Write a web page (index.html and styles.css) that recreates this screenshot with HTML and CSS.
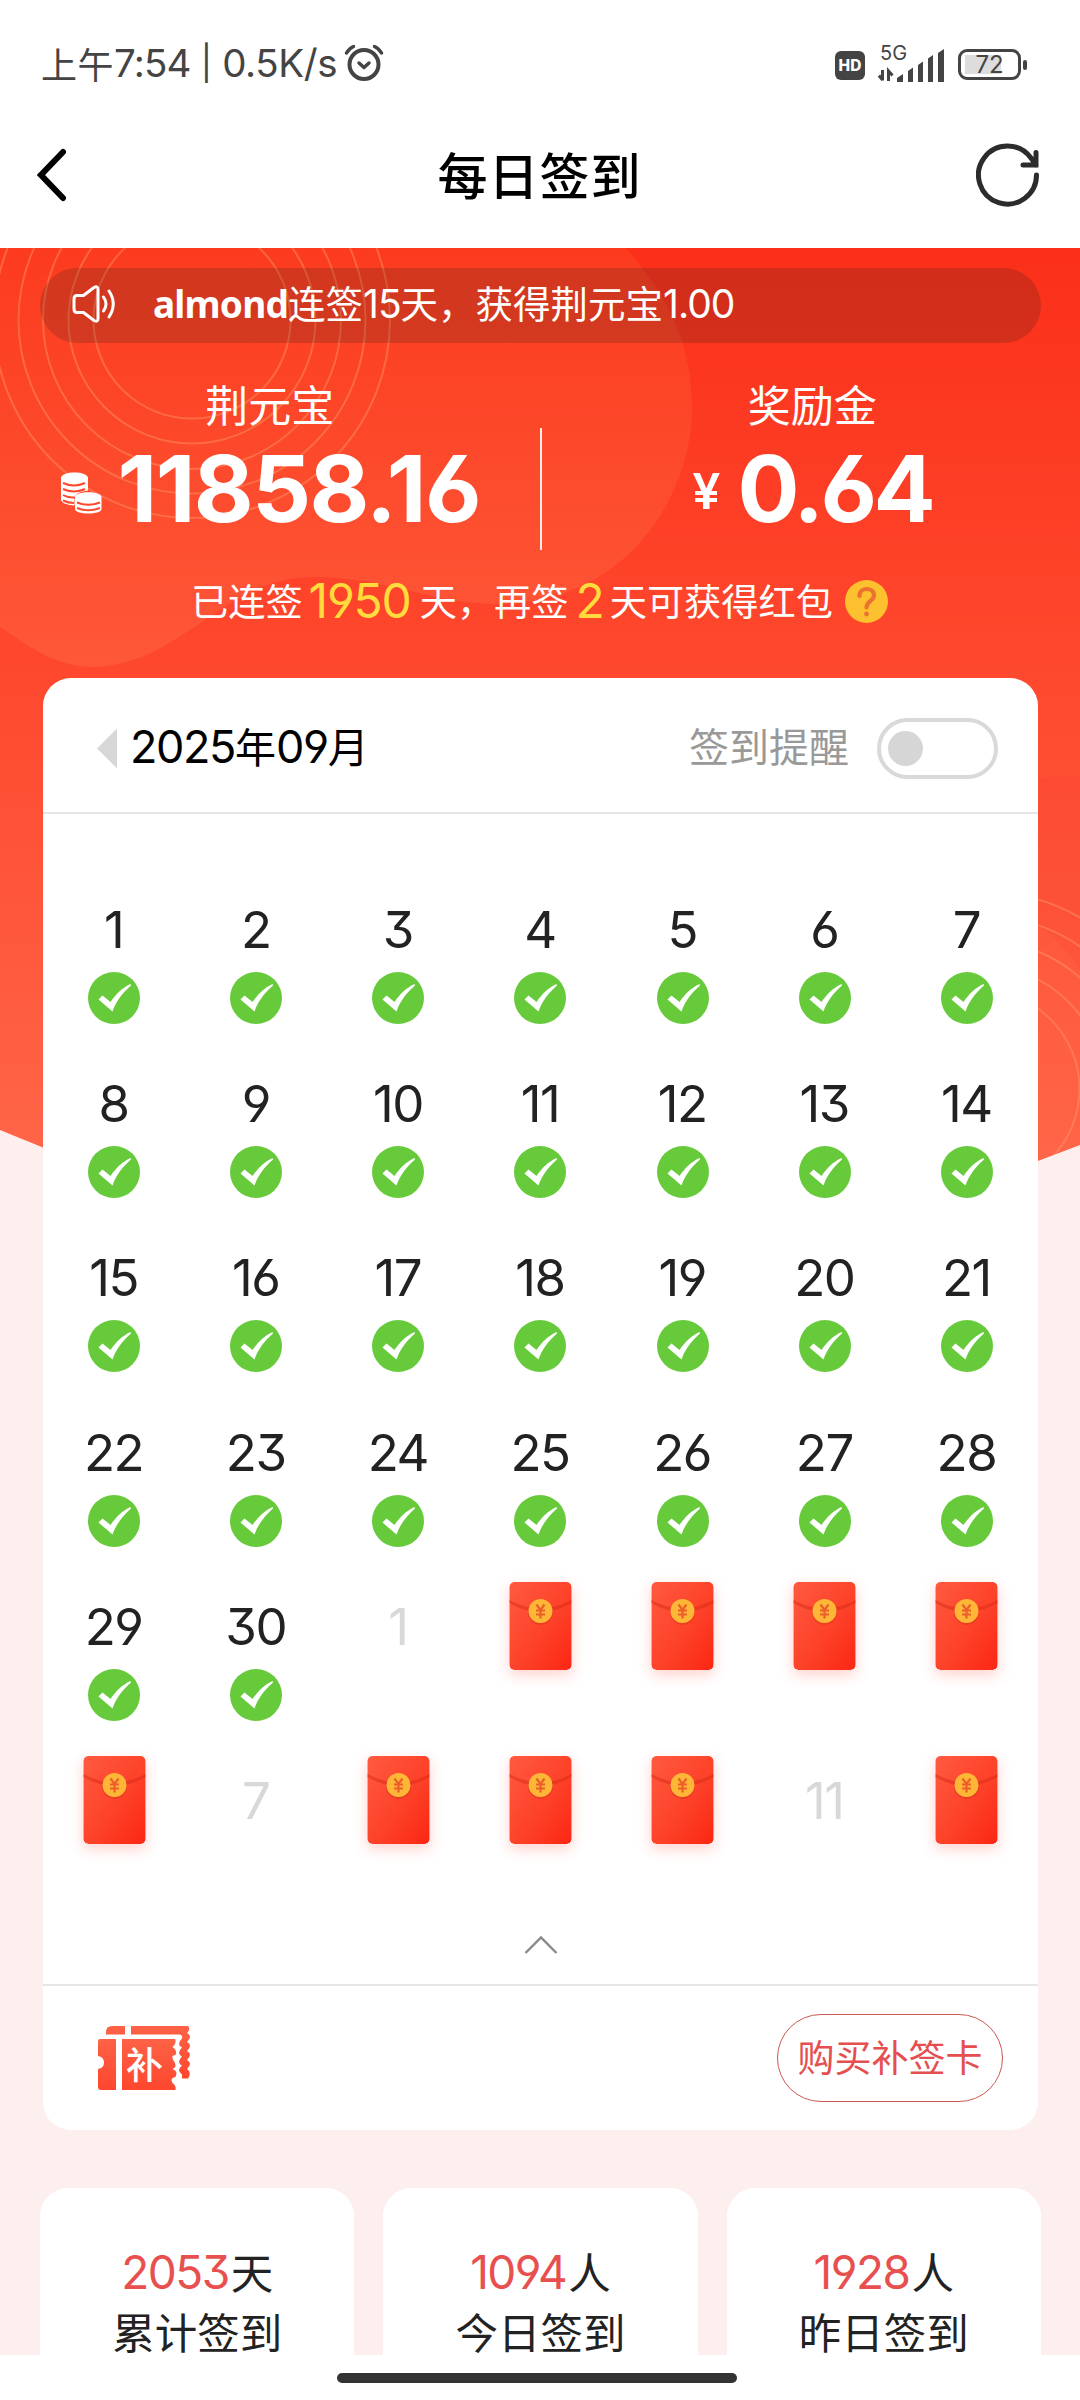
FILE: index.html
```html
<!DOCTYPE html>
<html lang="zh-CN">
<head>
<meta charset="utf-8">
<title>每日签到</title>
<link rel="stylesheet" href="styles.css">
</head>
<body>
<svg class="defs" width="0" height="0" aria-hidden="true">
  <defs>
    <linearGradient id="packetFill" x1="0" y1="0" x2="1" y2="1">
      <stop offset="0" stop-color="#ff5a40"/><stop offset=".55" stop-color="#fd4229"/><stop offset="1" stop-color="#fb2613"/>
    </linearGradient>
    <linearGradient id="ticketFill" x1="0" y1="0" x2="0" y2="1">
      <stop offset="0" stop-color="#fd6246"/><stop offset="1" stop-color="#fd472e"/>
    </linearGradient>
    <symbol id="check" viewBox="0 0 52 52">
      <circle cx="26" cy="26" r="26" fill="#67ca3b"/>
      <path d="M10.5 27.5l4-4 8 6.500C28 22 34 16 42.500 12l.5 1.500C34 21.500 28 29.500 24.500 39.500z" fill="#fff"/>
    </symbol>
    <symbol id="packet" viewBox="0 0 62 88">
      <rect width="62" height="88" rx="5" fill="url(#packetFill)"/>
      <path d="M0 18C20 29 42 29 62 18v3C42 33 20 33 0 21z" fill="#d92a18" opacity=".5"/>
      <circle cx="31" cy="30.500" r="12.500" fill="#c93114" opacity=".35"/>
      <circle cx="31" cy="29" r="12" fill="#fdb636"/>
      <path d="M27 22.500l4 5.500 4-5.500M26.500 28.500h9M26.500 32.500h9M31 28v8.500" fill="none" stroke="#ec5f2a" stroke-width="2.200"/>
    </symbol>
  </defs>
</svg>

<header class="status">
  <div class="status-left">
    <span class="cjk">上午</span><span class="num">7:54</span><span class="num bar">|</span><span class="num speed">0.5K/s</span>
    <svg width="40" height="38" viewBox="0 0 40 38" fill="none" stroke="#444" stroke-linecap="round">
      <circle cx="20" cy="20.500" r="14.500" stroke-width="4"/>
      <path d="M15 19l5 4.500 5-4.500" stroke-width="3.500" stroke-linejoin="round"/>
      <path d="M2.500 9Q5 4.500 9.500 2.500M37.500 9Q35 4.500 30.500 2.500" stroke-width="3.500"/>
    </svg>
  </div>
  <div class="status-right">
    <span class="hd">HD</span>
    <div class="signal">
      <span class="net">5G</span>
      <svg width="68" height="36" viewBox="0 0 68 36" fill="#444">
        <path d="M4.500 24v10.500M4.500 34L1 29.500M10.500 35V25l4 4.500" stroke="#444" stroke-width="3" fill="none"/>
        <path d="M19 36v-4l6-4v8zM30 36V25l5-3.500V36zM40 36V19l5-3.500V36zM50 36V12.500l5-3.500v27zM60 36V7l6-4v33z"/>
      </svg>
    </div>
    <div class="battery"><span>72</span></div><i class="battery-tip"></i>
  </div>
</header>

<nav class="nav">
  <svg width="30" height="54" viewBox="0 0 30 54" fill="none" stroke="#000" stroke-width="6" stroke-linecap="round"><path d="M26 4L4 27l22 23" stroke-linejoin="miter"/></svg>
  <h1>每日签到</h1>
  <svg width="64" height="64" viewBox="0 0 64 64" fill="none" stroke="#2c2c2c" stroke-width="5" stroke-linecap="round">
    <path d="M60.500 32A29 29 0 1 1 55 15l5 7M60 9.500V22H47"/>
  </svg>
</nav>

<main class="page">
  <svg class="backdrop" width="1080" height="920" viewBox="0 248 1080 920">
    <defs>
      <linearGradient id="sky" x1="0" y1="0" x2="0" y2="1">
        <stop offset="0" stop-color="#fb2f1a"/><stop offset=".45" stop-color="#fe482d"/><stop offset="1" stop-color="#ff6649"/>
      </linearGradient>
      <linearGradient id="cloud" x1="0" y1="0" x2="0" y2="1">
        <stop offset="0" stop-color="#ff6a30" stop-opacity=".2"/><stop offset="1" stop-color="#ff8058" stop-opacity=".28"/>
      </linearGradient>
      <clipPath id="slope"><path d="M0 248H1080V1145L540 1350 0 1130z"/></clipPath>
    </defs>
    <g clip-path="url(#slope)">
      <path d="M0 248H1080V1168H0z" fill="url(#sky)"/>
      <path d="M0 248H626C680 310 692 360 692 410 690 500 625 602 500 604 430 604 390 577 310 577 220 580 180 667 90 667 50 665 20 640 0 627z" fill="url(#cloud)"/>
      <path d="M1030 780Q1060 774 1080 777V970Q1050 925 1030 925z" fill="#ec3526" opacity=".13"/>
      <g fill="none" stroke="#ff9d6b" stroke-opacity=".42" stroke-width="2">
        <circle cx="192" cy="320" r="98.500"/><circle cx="192" cy="320" r="123.500"/><circle cx="192" cy="320" r="149"/><circle cx="192" cy="320" r="173.500"/><circle cx="192" cy="320" r="198"/>
        <circle cx="981" cy="1089" r="98.500"/><circle cx="981" cy="1089" r="123.500"/><circle cx="981" cy="1089" r="149"/><circle cx="981" cy="1089" r="173.500"/><circle cx="981" cy="1089" r="198"/>
      </g>
    </g>
  </svg>

  <div class="notice">
    <svg width="46" height="38" viewBox="0 0 46 38" fill="none" stroke="#fff" stroke-width="3" stroke-linejoin="round" stroke-linecap="round">
      <path d="M5 10.500h6.500L22 2.500q4-2 4 2v29q0 4-4 2L11.500 27.500H5Q2 27.500 2 24V14q0-3.500 3-3.500z"/>
      <path d="M31.500 12q5 7 0 14M37 6q8.500 13 0 26"/>
    </svg>
    <p><b class="name">almond</b>连签<span class="num">15</span>天，获得荆元宝<span class="num">1.00</span></p>
  </div>

  <section class="balance">
    <div class="account">
      <h2>荆元宝</h2>
      <div class="amount coin">
        <svg class="coins" width="41" height="42" viewBox="0 0 41 42" fill="#fff">
          <path d="M0 6C0-1.500 27-1.500 27 6V18.500Q14 20 13.500 26V33.500Q0 32.500 0 27z"/>
          <path d="M14 25c0-6.500 26.500-6.500 26.500 0v12c0 6-26.500 6-26.500 0z"/>
          <path d="M2 11q11 5 22 0M2 17q11 5 22 0M2 23q5 3 12 2.500M2 28.500q5 2.500 11 2.500M16 30.500q11 4.500 23 0M16 36q11 4.500 23 0" fill="none" stroke="#fb4a2e" stroke-width="2"/>
        </svg>
        <strong class="num">11858.16</strong>
      </div>
    </div>
    <i class="split"></i>
    <div class="account">
      <h2>奖励金</h2>
      <div class="amount bonus"><em class="num">¥</em><strong class="num">0.64</strong></div>
    </div>
  </section>

  <p class="streak">
    <span>已连签</span><b class="num days">1950</b><span>天，再签</span><b class="num left">2</b><span>天可获得红包</span>
    <svg width="43" height="43" viewBox="0 0 43 43"><circle cx="21.500" cy="21.500" r="21.500" fill="#fdc02e"/><path d="M14.500 16c0-9.500 14.500-9 14.500-.500 0 5.500-7.500 5.500-7.500 12" fill="none" stroke="#ed7130" stroke-width="4.200" stroke-linecap="round"/><circle cx="21.500" cy="34" r="2.400" fill="#ed7130"/></svg>
  </p>

  <section class="card">
    <div class="card-head">
      <i class="prev"></i>
      <h3><span class="num">2025</span>年<span class="num">09</span>月</h3>
      <span class="remind">签到提醒</span>
      <span class="toggle"><i></i></span>
    </div>
    <div class="calendar">
      <div class="day"><b>1</b><svg><use href="#check"/></svg></div>
      <div class="day"><b>2</b><svg><use href="#check"/></svg></div>
      <div class="day"><b>3</b><svg><use href="#check"/></svg></div>
      <div class="day"><b>4</b><svg><use href="#check"/></svg></div>
      <div class="day"><b>5</b><svg><use href="#check"/></svg></div>
      <div class="day"><b>6</b><svg><use href="#check"/></svg></div>
      <div class="day"><b>7</b><svg><use href="#check"/></svg></div>
      <div class="day"><b>8</b><svg><use href="#check"/></svg></div>
      <div class="day"><b>9</b><svg><use href="#check"/></svg></div>
      <div class="day"><b>10</b><svg><use href="#check"/></svg></div>
      <div class="day"><b>11</b><svg><use href="#check"/></svg></div>
      <div class="day"><b>12</b><svg><use href="#check"/></svg></div>
      <div class="day"><b>13</b><svg><use href="#check"/></svg></div>
      <div class="day"><b>14</b><svg><use href="#check"/></svg></div>
      <div class="day"><b>15</b><svg><use href="#check"/></svg></div>
      <div class="day"><b>16</b><svg><use href="#check"/></svg></div>
      <div class="day"><b>17</b><svg><use href="#check"/></svg></div>
      <div class="day"><b>18</b><svg><use href="#check"/></svg></div>
      <div class="day"><b>19</b><svg><use href="#check"/></svg></div>
      <div class="day"><b>20</b><svg><use href="#check"/></svg></div>
      <div class="day"><b>21</b><svg><use href="#check"/></svg></div>
      <div class="day"><b>22</b><svg><use href="#check"/></svg></div>
      <div class="day"><b>23</b><svg><use href="#check"/></svg></div>
      <div class="day"><b>24</b><svg><use href="#check"/></svg></div>
      <div class="day"><b>25</b><svg><use href="#check"/></svg></div>
      <div class="day"><b>26</b><svg><use href="#check"/></svg></div>
      <div class="day"><b>27</b><svg><use href="#check"/></svg></div>
      <div class="day"><b>28</b><svg><use href="#check"/></svg></div>
      <div class="day"><b>29</b><svg><use href="#check"/></svg></div>
      <div class="day"><b>30</b><svg><use href="#check"/></svg></div>
      <div class="day next"><b>1</b></div>
      <div class="day gift"><svg><use href="#packet"/></svg></div>
      <div class="day gift"><svg><use href="#packet"/></svg></div>
      <div class="day gift"><svg><use href="#packet"/></svg></div>
      <div class="day gift"><svg><use href="#packet"/></svg></div>
      <div class="day gift"><svg><use href="#packet"/></svg></div>
      <div class="day next"><b>7</b></div>
      <div class="day gift"><svg><use href="#packet"/></svg></div>
      <div class="day gift"><svg><use href="#packet"/></svg></div>
      <div class="day gift"><svg><use href="#packet"/></svg></div>
      <div class="day next"><b>11</b></div>
      <div class="day gift"><svg><use href="#packet"/></svg></div>
    </div>
    <div class="collapse">
      <svg width="34" height="20" viewBox="0 0 34 20" fill="none" stroke="#8a8a8a" stroke-width="2.400"><path d="M1.500 18L17 2.500 32.500 18"/></svg>
    </div>
    <div class="card-foot">
      <div class="ticket">
        <svg width="92" height="64" viewBox="0 0 92 64" fill="url(#ticketFill)">
          <path d="M8 8.500V6Q8 0 14 0H27V8.500zM33 0H90q3 3-1 7 6 3 0 9 6 3 0 9 6 3 0 9 6 3 0 9 5 3 1 9.500h-6v-4q-6-4 0-9-6-3 0-9-6-3 0-9-6-3 0-9 1-4-3-4H33z"/>
          <path d="M2 13H18V64H3q-3 0-3-3V43q6-1 6-6.500T0 30V16q0-3 2-3zM24 13H77q2 4-2.500 8 5 3 3 8-6 0-1 7 3 5-2 7 6 2 3 8-6 1-3 6 4 3 3 7H24z"/>
        </svg>
        <span>补</span>
      </div>
      <button class="buy" type="button">购买补签卡</button>
    </div>
  </section>

  <section class="stats">
    <div class="stat"><p><b class="num">2053</b>天</p><span>累计签到</span></div>
    <div class="stat"><p><b class="num">1094</b>人</p><span>今日签到</span></div>
    <div class="stat"><p><b class="num">1928</b>人</p><span>昨日签到</span></div>
  </section>
</main>

<footer class="gesture"><i></i></footer>
</body>
</html>
```

FILE: styles.css
```css
* { box-sizing: border-box; margin: 0; padding: 0; }
body {
  width: 1080px; height: 2400px; overflow: hidden;
  display: flex; flex-direction: column;
  background: #fff; color: #222;
  font-family: "Noto Sans CJK SC", "Noto Sans", sans-serif;
}
svg { display: block; flex: none; }
i, em { font-style: normal; }
.defs { position: absolute; }
.num, .day b {
  font-family: Inter, "Noto Sans", sans-serif;
  font-feature-settings: "cv03", "cv04", "cv09";
}

.status {
  height: 96px; padding: 33px 53px 0 41px;
  display: flex; justify-content: space-between; align-items: flex-start;
  color: #444;
}
.status-left { display: flex; align-items: center; height: 60px; line-height: 60px; font-size: 38px; }
.status-left .cjk { font-size: 36px; letter-spacing: .5px; }
.status-left .num { font-size: 38.5px; letter-spacing: -.8px; }
.status-left .bar { margin: 0 11px 0 10px; font-size: 34px; }
.status-left .speed { letter-spacing: -.4px; }
.status-left svg { margin: 0 0 0 7px; }
.status-right { display: flex; align-items: flex-start; padding-top: 13px; }
.hd {
  width: 30px; height: 29px; margin: 5px 13px 0 0; border-radius: 6px; background: #444; color: #fff;
  font: 800 15.500px/29px Inter, sans-serif; text-align: center;
}
.signal { position: relative; width: 68px; height: 36px; margin-right: 12px; }
.signal .net { position: absolute; left: 2px; top: -4px; font: 400 20px/22px Inter, sans-serif; }
.battery {
  width: 63px; height: 31px; margin-top: 3px; border: 3px solid #444; border-radius: 9px;
  background: linear-gradient(#ddd, #ddd) 4px 3px / 36px 19px no-repeat;
  font: 400 24px/25px Inter, sans-serif; text-align: center;
}
.battery-tip { width: 4px; height: 10px; margin: 14px 0 0 2px; border-radius: 2px; background: #444; }

.nav {
  height: 152px; padding: 6px 40px 0 37px;
  display: flex; align-items: center; justify-content: space-between;
}
.nav h1 { margin: -5px 0 0 36px; font-size: 50px; font-weight: 500; letter-spacing: 1px; line-height: 70px; color: #000; }

.page {
  position: relative; height: 2107px; overflow: hidden; padding: 20px 39px 0 40px;
  display: flex; flex-direction: column; background: #feefef;
}
.backdrop { position: absolute; left: 0; top: 0; }
.notice, .balance, .streak, .card, .stats { position: relative; flex: none; }

.notice {
  height: 75px; border-radius: 38px; padding-left: 32px;
  display: flex; align-items: center; background: rgba(30, 30, 20, .18);
  color: #fff; font-size: 37.500px;
}
.notice svg { margin-bottom: 4px; }
.notice p { margin: -6px 0 0 35px; line-height: 75px; white-space: nowrap; }
.notice .name { font-family: "Noto Sans", sans-serif; font-weight: 700; font-size: 37px; letter-spacing: -.8px; }
.notice .num { font-size: 39px; letter-spacing: -1px; }

.balance { height: 216px; display: flex; color: #fff; }
.account { flex: 1; padding-top: 30px; display: flex; flex-direction: column; align-items: center; }
.account h2 { font-size: 43px; font-weight: 400; line-height: 60px; white-space: nowrap; margin-left: 1px; }
.account:first-child { padding-right: 41px; }
.account:last-child { padding-left: 41px; }
.amount { display: flex; align-items: center; height: 106px; margin-top: 3px; white-space: nowrap; }
.amount strong { font-size: 92px; font-weight: 650; line-height: 106px; letter-spacing: -1.500px; }
.coin { margin-left: 3px; }
.coins { margin: 8px 15px 0 0; }
.bonus { margin-left: 1px; }
.bonus em { font-size: 50px; font-weight: 600; margin: 4px 17px 0 0; }
.bonus strong { letter-spacing: -3.500px; }
.split { width: 2px; height: 122px; margin-top: 85px; background: rgba(255, 255, 255, .9); }

.streak {
  height: 84px; padding-left: 151px; display: flex; align-items: center;
  color: #fff; font-size: 37.200px; line-height: 82px; white-space: nowrap;
}
.streak > span { margin-top: -2px; }
.streak .num { font-size: 48px; font-weight: 400; color: #ffdc3c; }
.streak .days { margin: 0 9px 0 6px; letter-spacing: -1.200px; }
.streak .left { margin: 0 5px 0 7px; }
.streak svg { margin-left: 12px; }

.card { height: 1452px; margin: 35px 3px 0 3px; border-radius: 28px; background: #fff; }
.card-head {
  height: 136px; padding: 7px 40px 0 54px; border-bottom: 2px solid #e6e6e6;
  display: flex; align-items: center;
}
.prev { width: 20px; height: 40px; background: #d7d7d7; clip-path: polygon(100% 0, 100% 100%, 0 50%); }
.card-head h3 { margin: -7px 0 0 13px; font-size: 41px; font-weight: 400; color: #000; white-space: nowrap; }
.card-head h3 .num { font-size: 45px; letter-spacing: -1.400px; }
.remind { margin: -7px 0 0 auto; color: #999; font-size: 40px; }
.toggle { width: 121px; height: 61px; margin-left: 28px; padding: 9px 7px; border: 4px solid #d9d9d9; border-radius: 31px; }
.toggle i { display: block; width: 35px; height: 35px; border-radius: 50%; background: #d6d6d6; }

.calendar { display: grid; grid-template-columns: repeat(7, 1fr); grid-auto-rows: 174.200px; padding-top: 76px; }
.day { display: flex; flex-direction: column; align-items: center; }
.day b { font-weight: 400; font-size: 51px; line-height: 80px; letter-spacing: -1.500px; margin-right: 1px; }
.day svg { width: 52px; height: 52px; margin-top: 2px; }
.day.next b { color: #d8d8d8; }
.day.gift svg { width: 63px; height: 88px; margin-top: -5px; border-radius: 5px; box-shadow: 0 5px 14px rgba(255, 80, 60, .25); }

.collapse { height: 49px; display: flex; justify-content: center; }
.card-foot {
  height: 145px; padding: 0 35px 0 55px; border-top: 2px solid #e6e6e6;
  display: flex; align-items: center; justify-content: space-between;
}
.ticket { position: relative; }
.ticket span { position: absolute; left: 28px; top: 16px; font-size: 37px; line-height: 42px; font-weight: 500; color: #fff; }
.buy {
  width: 226px; height: 88px; border: 1.500px solid #cd5852; border-radius: 44px; background: #fff;
  padding-bottom: 4px; color: #e54f4f; font: 400 37px/80px "Noto Sans CJK SC", sans-serif; white-space: nowrap;
}

.stats { display: grid; grid-template-columns: repeat(3, 1fr); gap: 29px; margin-top: 58px; }
.stat { height: 240px; padding-top: 53px; border-radius: 28px; background: #fff; text-align: center; color: #222; font-size: 42.500px; line-height: 60px; }
.stat p { height: 60px; white-space: nowrap; }
.stat .num { color: #e8504f; font-weight: 400; font-size: 46px; letter-spacing: -1.500px; margin-right: 2px; }
.stat span { display: block; }

.gesture { height: 45px; padding-top: 18px; display: flex; justify-content: center; background: #fff; }
.gesture i { width: 400px; height: 10px; border-radius: 5px; background: #333; margin-right: 6px; }
```
